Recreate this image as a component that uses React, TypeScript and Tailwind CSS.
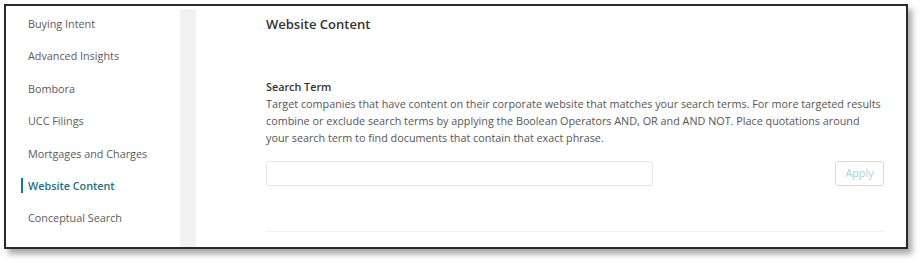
import React from "react";

const items = [
  "Buying Intent",
  "Advanced Insights",
  "Bombora",
  "UCC Filings",
  "Mortgages and Charges",
  "Website Content",
  "Conceptual Search",
  "Business Signals",
];

export default function App() {
  return (
    <div
      className="relative w-[922px] h-[263px] bg-white overflow-hidden"
      style={{ fontFamily: '"Open Sans", "Noto Sans", sans-serif' }}
    >
      <div className="absolute left-[4px] top-[4px] w-[904px] h-[245px] border-2 border-[#2a2a2a] bg-white overflow-hidden shadow-[4px_5px_6px_rgba(0,0,0,0.35)] flex">
        {/* Sidebar */}
        <div className="w-[174px] shrink-0 pt-[2px]">
          {items.map((it) => {
            const active = it === "Website Content";
            return (
              <div key={it} className="relative h-[32.4px] flex items-center pl-[22px]">
                {active && (
                  <div className="absolute left-[15px] top-[8px] w-[2px] h-[15px] bg-[#1a7a8f]" />
                )}
                <span
                  className={
                    active
                      ? "text-[10.8px] text-[#1e6f87] font-semibold"
                      : "text-[10.8px] text-[#5a5a5a]"
                  }
                >
                  {it}
                </span>
              </div>
            );
          })}
        </div>
        {/* Gray strip */}
        <div className="w-[16px] shrink-0 mt-[3px] bg-[#f2f2f2]" />
        {/* Main */}
        <div className="flex-1 pl-[70px] pr-[22px]">
          <div className="w-[618px]">
            <div className="pt-[9px] text-[13px] font-semibold text-[#333333] leading-[18px]">
              Website Content
            </div>
            <div className="mt-[46px] text-[10.8px] font-semibold text-[#333333] leading-[16px]">
              Search Term
            </div>
            <div className="text-[10.8px] text-[#555555] leading-[17px] whitespace-nowrap">
              <div>
                Target companies that have content on their corporate website that matches your search terms. For more targeted results
              </div>
              <div>
                combine or exclude search terms by applying the Boolean Operators AND, OR and AND NOT. Place quotations around
              </div>
              <div>your search term to find documents that contain that exact phrase.</div>
            </div>
            <div className="mt-[15px] flex items-center justify-between">
              <div className="w-[387px] h-[25px] border border-[#e6e6e6] rounded-[3px] bg-white" />
              <div className="w-[49px] h-[25px] border border-[#c3e0ea] rounded-[3px] flex items-center justify-center text-[10.8px] text-[#a7d0de]">
                Apply
              </div>
            </div>
            <div className="mt-[45px] h-px bg-[#efefef]" />
          </div>
        </div>
      </div>
    </div>
  );
}
